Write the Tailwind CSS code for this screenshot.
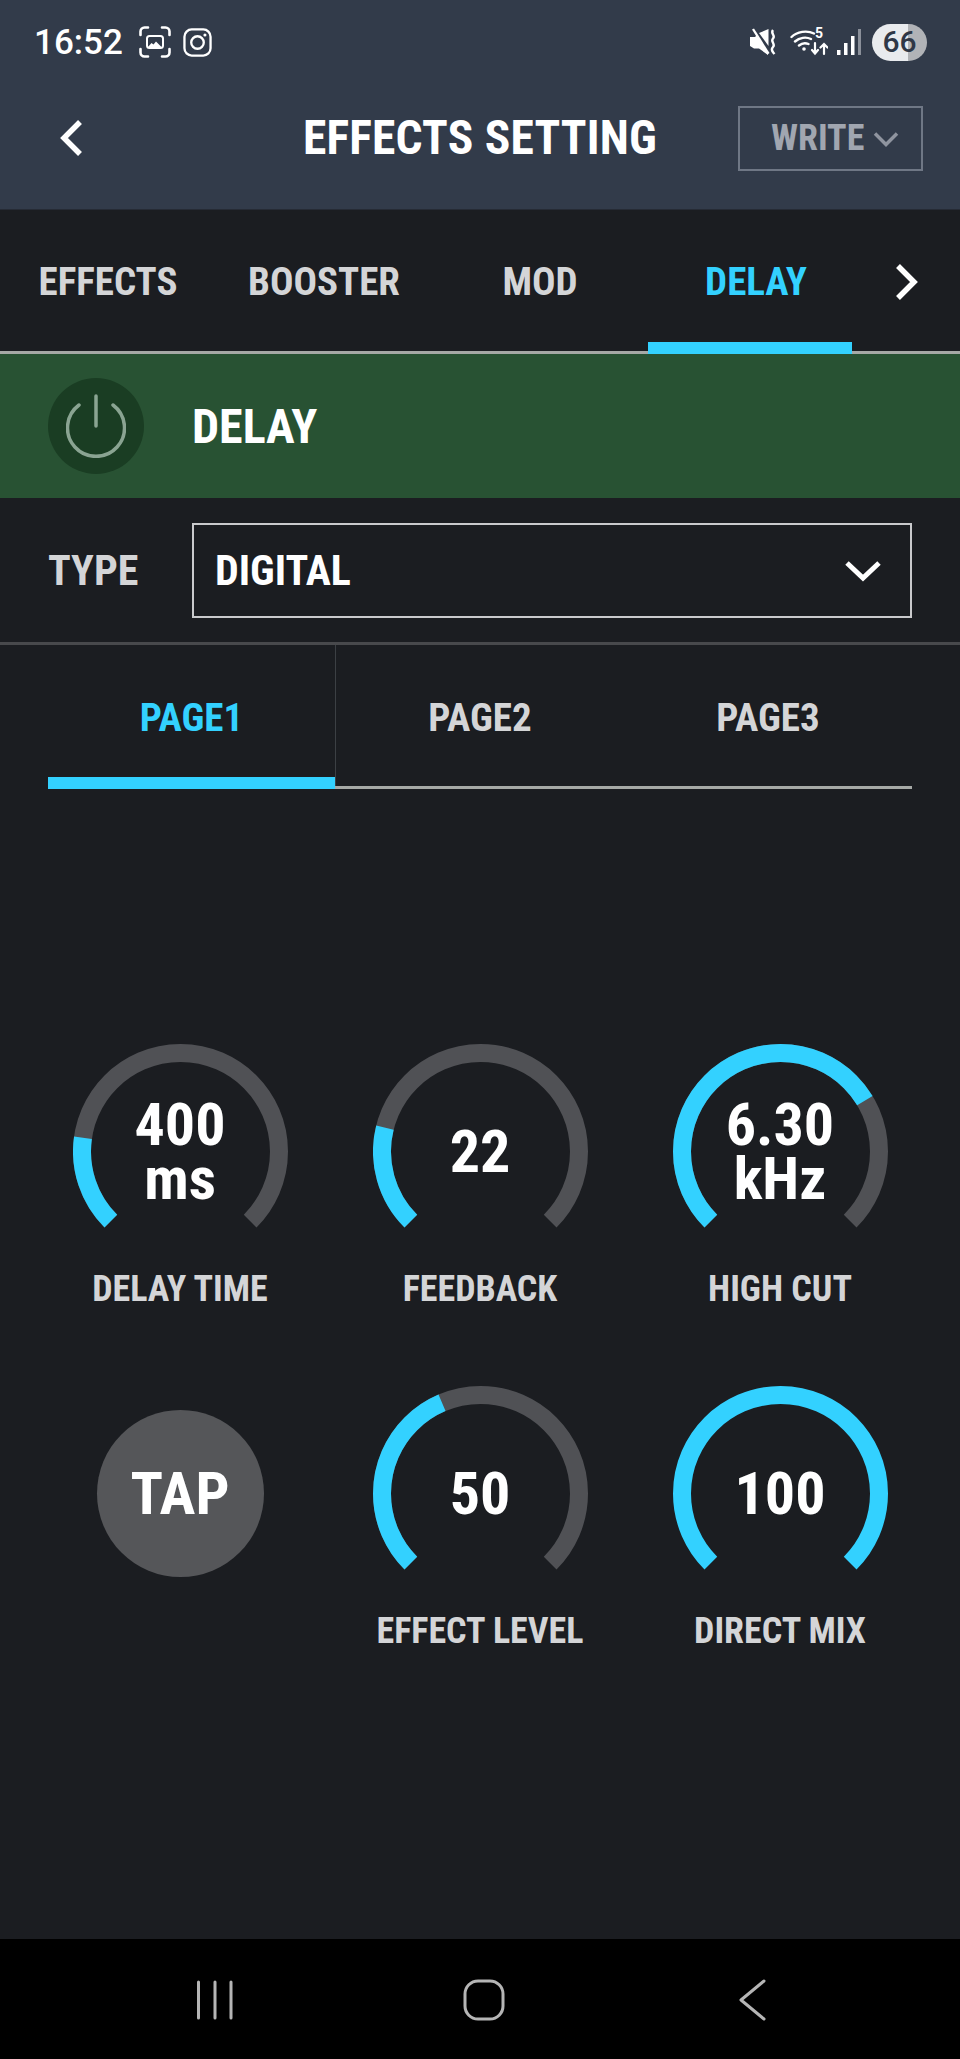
<!DOCTYPE html>
<html lang="en">
<head>
<meta charset="UTF-8">
<meta name="viewport" content="width=device-width, initial-scale=1.0">
<title>Effects Setting</title>
<script src="https://cdn.jsdelivr.net/npm/@tailwindcss/browser@4"></script>
</head>
<body class="bg-[#1b1d21] font-['Roboto',sans-serif]">
<div class="w-[960px] h-[2059px] flex flex-col overflow-hidden font-bold [font-stretch:75%]">

  <!-- status bar + title -->
  <header class="h-[210px] bg-[#323b4a] text-white shrink-0 border-b border-[#262b35]">
    <div class="h-[84px] flex items-center pl-[34px] pr-[33px] [font-stretch:100%]">
      <span class="text-[35px] font-medium leading-none">16:52</span>
      <svg class="ml-[16px]" width="32" height="32" viewBox="0 0 32 32" fill="none" stroke="white" stroke-width="2.600" stroke-linecap="round">
        <path d="M1.500 9V5.500a4 4 0 0 1 4-4H9M23 1.500h3.500a4 4 0 0 1 4 4V9M1.500 23v3.500a4 4 0 0 0 4 4H9M23 30.500h3.500a4 4 0 0 0 4-4V23"/>
        <rect x="8" y="10" width="16" height="12" rx="2.500" stroke-width="2"/>
        <path d="M9 21l3.500-4 2 1.500 2.500-3 5.500 5.500z" fill="white" stroke="none"/>
      </svg>
      <svg class="ml-[12px]" width="29" height="29" viewBox="0 0 30 30" fill="none" stroke="white" stroke-width="2.400">
        <rect x="1.500" y="1.500" width="27" height="27" rx="7.500"/>
        <circle cx="15" cy="15" r="6.500"/>
        <circle cx="22.700" cy="7.300" r="1.600" fill="white" stroke="none"/>
      </svg>
      <svg class="ml-auto" width="28" height="28" viewBox="0 0 28 28" fill="white">
        <path d="M1 9h5l1.500-1.500L19 24.500V27L10 20.500H5L1 18z"/>
        <path d="M10 5 19.500 1v17z"/>
        <path d="M3 1.500 5 .5 20.500 25 18.500 26.500z"/>
        <path d="M24 2c-3 3.500 3 5.500 0 8.500s3 5.500 0 8.500 0 5 1.500 7" fill="none" stroke="white" stroke-width="2.400"/>
      </svg>
      <div class="relative ml-[13px] w-[38px] h-[28px]">
        <svg width="38" height="28" viewBox="0 0 38 28" fill="none" stroke="white" stroke-linecap="round">
          <path d="M1.500 9C7 3.500 17 2 24 5.500M5 13.500c4.500-4 11-5 16-2.500M9 17.500c3-2.500 6.500-2.800 9.500-1.500" stroke-width="2.400"/>
          <circle cx="14" cy="21" r="1.800" fill="white" stroke="none"/>
          <path d="M25 15v10m-3-3 3 3.500 3-3.500M34 26V16m-3.500 3.500 3.500-3.500 3.500 3.500" stroke-width="2.200"/>
        </svg>
        <span class="absolute left-[25px] -top-[2px] text-[14px] font-bold leading-none">5</span>
      </div>
      <svg class="ml-[9px]" width="24" height="28" viewBox="0 0 24 28" fill="white">
        <rect x="0" y="22" width="3.500" height="5"/>
        <rect x="7" y="15" width="3.500" height="12"/>
        <rect x="14" y="8" width="3.500" height="19"/>
        <rect x="21" y="1" width="3" height="26" fill="#8b909a"/>
      </svg>
      <span class="ml-[11px] w-[55px] h-[37px] rounded-full flex items-center justify-center bg-[linear-gradient(90deg,#e9ebee_0,#e9ebee_65%,#b1b3b7_65%)] text-[#2f3746] text-[30px] font-medium leading-none">66</span>
    </div>
    <div class="h-[125px] relative flex items-center justify-center">
      <svg class="absolute left-[59px] top-[35px]" width="24" height="38" viewBox="0 0 24 38" fill="none" stroke="white" stroke-width="5.500"><path d="M21 3 5 19l16 16"/></svg>
      <h1 class="text-[47.500px] leading-none -mt-[16px] tracking-[0.2px]">EFFECTS SETTING</h1>
      <button class="absolute left-[738px] top-[22px] w-[185px] h-[65px] border-2 border-[#6f7785] text-[#a1a6b0] text-[36px] leading-none flex items-center pl-[31px] pb-[2px] gap-[9px]">
        WRITE
        <svg class="mt-[3px]" width="26" height="17" viewBox="0 0 26 17" fill="none" stroke="#8f949f" stroke-width="3.500"><path d="M2 2.500 13 13.500 24 2.500"/></svg>
      </button>
    </div>
  </header>

  <!-- top tabs -->
  <nav class="h-[144px] shrink-0 flex border-b-[3px] border-[#a6a9a6] text-[#d4d5d7] text-[39px] leading-none">
    <a class="w-[216px] flex items-center justify-center pt-[4px]">EFFECTS</a>
    <a class="w-[216px] flex items-center justify-center pt-[4px]">BOOSTER</a>
    <a class="w-[216px] flex items-center justify-center pt-[4px]">MOD</a>
    <a class="w-[216px] relative flex items-center justify-center pt-[4px] text-[#33d1ff]">
      DELAY
      <span class="absolute left-0 -bottom-[3px] w-[204px] h-[12px] bg-[#33d1ff]"></span>
    </a>
    <span class="w-[86px] flex items-center justify-center pt-[2px]">
      <svg width="26" height="38" viewBox="0 0 26 38" fill="none" stroke="white" stroke-width="5.500"><path d="M4 3 20 19 4 35"/></svg>
    </span>
  </nav>

  <!-- delay switch -->
  <section class="h-[144px] shrink-0 bg-[#285233] flex items-center pl-[48px]">
    <span class="w-[96px] h-[96px] rounded-full bg-[#1a3d23] flex items-center justify-center">
      <svg width="60" height="64" viewBox="0 0 60 64" fill="none" stroke="#8aa492" stroke-width="3.500" stroke-linecap="round">
        <path d="M13 11A28.500 28.500 0 1 0 47 11"/><path d="M30 2V32"/>
      </svg>
    </span>
    <span class="ml-[48px] pt-[2px] text-white text-[48px] leading-none">DELAY</span>
  </section>

  <!-- type select -->
  <section class="h-[147px] shrink-0 flex items-center pl-[48px] pt-[1px] border-b-[3px] border-[#48494c]">
    <span class="w-[144px] text-[#d4d5d7] text-[42px] leading-none">TYPE</span>
    <div class="w-[720px] h-[95px] border-2 border-[#c9cacc] flex items-center justify-between pl-[21px] pr-[29px] text-white text-[42px] leading-none">
      DIGITAL
      <svg width="36" height="22" viewBox="0 0 36 22" fill="none" stroke="white" stroke-width="5"><path d="M2 3 18 18 34 3"/></svg>
    </div>
  </section>

  <!-- page tabs -->
  <div class="mx-[48px] h-[144px] shrink-0 flex border-b-[3px] border-[#a6a9a6] text-[39px] leading-none text-[#d4d5d7]">
    <a class="w-[288px] relative flex items-center justify-center pt-[6px] text-[#33d1ff] border-r border-[#3c4044]">
      PAGE1
      <span class="absolute left-0 right-0 -bottom-[3px] h-[12px] bg-[#33d1ff]"></span>
    </a>
    <a class="w-[288px] flex items-center justify-center pt-[6px]">PAGE2</a>
    <a class="w-[288px] flex items-center justify-center pt-[6px]">PAGE3</a>
  </div>

  <!-- knobs -->
  <main class="flex-1 pt-[255px] px-[30px] grid grid-cols-3 auto-rows-[342px] text-center">

    <div class="flex flex-col items-center">
      <div class="relative w-[215px] h-[215px]">
        <svg width="215" height="215" viewBox="0 0 215 215" fill="none" stroke-width="18">
          <path d="M37.850 177.150A98.500 98.500 0 1 1 177.150 177.150" stroke="#505155"/>
          <path d="M37.850 177.150A98.500 98.500 0 1 1 177.150 177.150" stroke="#33d1ff" pathLength="270" stroke-dasharray="53 300"/>
        </svg>
        <div class="absolute inset-0 flex flex-col items-center justify-center text-white text-[60px] leading-[54px]"><span>400</span><span>ms</span></div>
      </div>
      <span class="mt-[12px] text-[#d4d5d7] text-[36px] leading-none">DELAY TIME</span>
    </div>

    <div class="flex flex-col items-center">
      <div class="relative w-[215px] h-[215px]">
        <svg width="215" height="215" viewBox="0 0 215 215" fill="none" stroke-width="18">
          <path d="M37.850 177.150A98.500 98.500 0 1 1 177.150 177.150" stroke="#505155"/>
          <path d="M37.850 177.150A98.500 98.500 0 1 1 177.150 177.150" stroke="#33d1ff" pathLength="270" stroke-dasharray="59 300"/>
        </svg>
        <div class="absolute inset-0 flex flex-col items-center justify-center text-white text-[60px] leading-[54px]"><span>22</span></div>
      </div>
      <span class="mt-[12px] text-[#d4d5d7] text-[36px] leading-none">FEEDBACK</span>
    </div>

    <div class="flex flex-col items-center">
      <div class="relative w-[215px] h-[215px]">
        <svg width="215" height="215" viewBox="0 0 215 215" fill="none" stroke-width="18">
          <path d="M37.850 177.150A98.500 98.500 0 1 1 177.150 177.150" stroke="#505155"/>
          <path d="M37.850 177.150A98.500 98.500 0 1 1 177.150 177.150" stroke="#33d1ff" pathLength="270" stroke-dasharray="194 300"/>
        </svg>
        <div class="absolute inset-0 flex flex-col items-center justify-center text-white text-[60px] leading-[54px]"><span>6.30</span><span>kHz</span></div>
      </div>
      <span class="mt-[12px] text-[#d4d5d7] text-[36px] leading-none">HIGH CUT</span>
    </div>

    <div class="flex flex-col items-center">
      <div class="w-[215px] h-[215px] flex items-center justify-center">
        <button class="w-[167px] h-[167px] rounded-full bg-[#555659] text-white text-[60px] leading-none">TAP</button>
      </div>
    </div>

    <div class="flex flex-col items-center">
      <div class="relative w-[215px] h-[215px]">
        <svg width="215" height="215" viewBox="0 0 215 215" fill="none" stroke-width="18">
          <path d="M37.850 177.150A98.500 98.500 0 1 1 177.150 177.150" stroke="#505155"/>
          <path d="M37.850 177.150A98.500 98.500 0 1 1 177.150 177.150" stroke="#33d1ff" pathLength="270" stroke-dasharray="112 300"/>
        </svg>
        <div class="absolute inset-0 flex flex-col items-center justify-center text-white text-[60px] leading-[54px]"><span>50</span></div>
      </div>
      <span class="mt-[12px] text-[#d4d5d7] text-[36px] leading-none">EFFECT LEVEL</span>
    </div>

    <div class="flex flex-col items-center">
      <div class="relative w-[215px] h-[215px]">
        <svg width="215" height="215" viewBox="0 0 215 215" fill="none" stroke-width="18">
          <path d="M37.850 177.150A98.500 98.500 0 1 1 177.150 177.150" stroke="#33d1ff"/>
        </svg>
        <div class="absolute inset-0 flex flex-col items-center justify-center text-white text-[60px] leading-[54px]"><span>100</span></div>
      </div>
      <span class="mt-[12px] text-[#d4d5d7] text-[36px] leading-none">DIRECT MIX</span>
    </div>
  </main>

  <!-- android nav -->
  <footer class="h-[120px] shrink-0 bg-black relative">
    <svg class="absolute left-0 top-0" width="960" height="120" viewBox="0 0 960 120" fill="none" stroke="#b5b5b5" stroke-width="3" stroke-linecap="round" stroke-linejoin="round">
      <path d="M198.500 43v36M215 43v36M231 43v36"/>
      <rect x="465" y="42" width="38" height="38" rx="13"/>
      <path d="M764 42 741 61l23 19"/>
    </svg>
  </footer>
</div>
</body>
</html>
